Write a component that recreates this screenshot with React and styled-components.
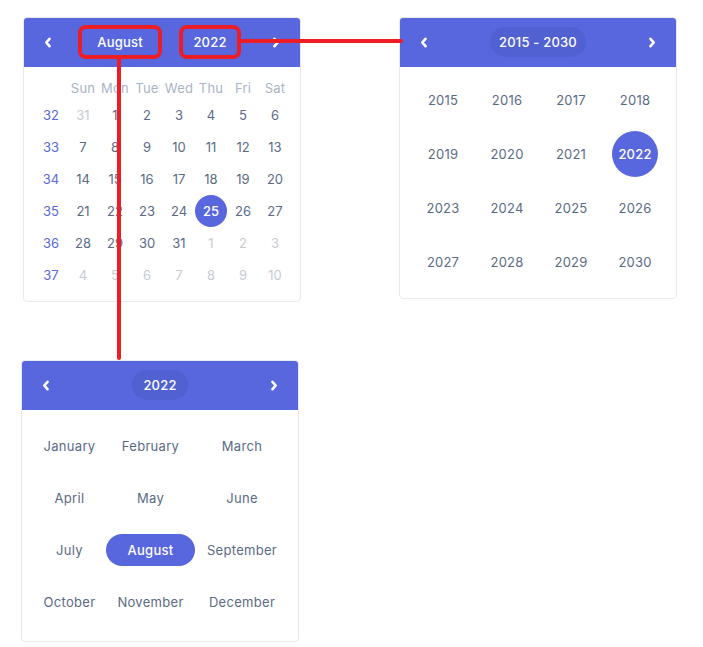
import React from 'react'
import styled, { createGlobalStyle } from 'styled-components'

const GlobalStyle = createGlobalStyle`
  html, body {
    margin: 0;
    padding: 0;
    background: #ffffff;
  }
  body {
    font-family: Inter, "Open Sans", "Noto Sans", sans-serif;
    -webkit-font-smoothing: antialiased;
  }
`

const brand = '#5867dd'
const annot = '#ee1c25'

const Page = styled.div`
  position: relative;
  display: grid;
  grid-template-columns: 378px 278px;
  align-items: start;
  align-content: start;
  row-gap: 58px;
  padding: 17px 0 0 21px;
  width: 703px;
  height: 647px;
  box-sizing: border-box;
`

const Card = styled.div`
  width: ${({ $width }) => $width || 278}px;
  margin-left: ${({ $shift }) => $shift || 0}px;
  border: 1px solid #e8eaed;
  border-radius: 4px;
  background: #fff;
  box-sizing: border-box;
  overflow: hidden;
`

const Header = styled.div`
  display: grid;
  grid-template-columns: 50px 1fr 50px;
  align-items: center;
  height: 50px;
  margin: -1px -1px 0;
  background: ${brand};
  color: #fff;
`

const NavButton = styled.span`
  display: flex;
  justify-content: center;
  align-items: center;
  height: 100%;
`

const TitleGroup = styled.div`
  display: flex;
  justify-content: center;
  align-items: center;
  gap: 17px;
  padding-right: 5px;
`

const TitleButton = styled.span`
  display: flex;
  justify-content: center;
  align-items: center;
  width: ${({ $w }) => $w}px;
  height: 34px;
  box-sizing: border-box;
  border: 4px solid ${annot};
  border-radius: 8px;
  font-size: 13px;
  font-weight: 500;
  letter-spacing: 0.2px;
`

const TitlePill = styled.span`
  justify-self: center;
  display: flex;
  justify-content: center;
  align-items: center;
  width: ${({ $w }) => $w}px;
  height: 30px;
  border-radius: 15px;
  background: #5261d2;
  font-size: 13px;
  font-weight: 500;
  letter-spacing: 0.2px;
`

const DayGrid = styled.div`
  display: grid;
  grid-template-columns: repeat(8, 32px);
  grid-template-rows: 22px repeat(6, 32px);
  padding: 10px 10px 10px 11px;
`

const WeekdayCell = styled.span`
  display: flex;
  justify-content: center;
  align-items: center;
  color: #a9b4c6;
  font-size: 13px;
  letter-spacing: 0.2px;
`

const WeekNum = styled.span`
  display: flex;
  justify-content: center;
  align-items: center;
  color: ${brand};
  font-size: 13px;
`

const Day = styled.span`
  display: flex;
  justify-content: center;
  align-items: center;
  border-radius: 50%;
  font-size: 13px;
  font-weight: ${({ $active }) => ($active ? 500 : 400)};
  color: ${({ $active, $muted }) => ($active ? '#fff' : $muted ? '#c7cbd1' : '#5a6a85')};
  background: ${({ $active }) => ($active ? brand : 'transparent')};
`

const YearGrid = styled.div`
  display: grid;
  grid-template-columns: repeat(4, 64px);
  grid-auto-rows: 54px;
  padding: 6px 11px 9px;
`

const YearCell = styled.span`
  display: flex;
  justify-content: center;
  align-items: center;
  justify-self: center;
  align-self: center;
  width: 46px;
  height: 46px;
  border-radius: 50%;
  font-size: 13px;
  letter-spacing: 0.2px;
  font-weight: ${({ $active }) => ($active ? 500 : 400)};
  color: ${({ $active }) => ($active ? '#fff' : '#5a6a85')};
  background: ${({ $active }) => ($active ? brand : 'transparent')};
`

const MonthGrid = styled.div`
  display: grid;
  grid-template-columns: 73px 89px 94px;
  grid-auto-rows: 52px;
  padding: 10px 11px 13px;
`

const MonthCell = styled.span`
  display: flex;
  justify-content: center;
  align-items: center;
  align-self: center;
  height: 32px;
  border-radius: 16px;
  font-size: 13px;
  letter-spacing: 0.3px;
  font-weight: ${({ $active }) => ($active ? 500 : 400)};
  color: ${({ $active }) => ($active ? '#fff' : '#5a6a85')};
  background: ${({ $active }) => ($active ? brand : 'transparent')};
`

// red annotation connectors drawn over the cards
const HLine = styled.div`
  position: absolute;
  left: 240px;
  top: 39px;
  width: 163px;
  height: 4px;
  background: ${annot};
  border-radius: 2px;
`

const VLine = styled.div`
  position: absolute;
  left: 117px;
  top: 57px;
  width: 4px;
  height: 303px;
  background: ${annot};
  border-radius: 2px;
`

const Chevron = ({ dir }) => (
  <svg width="8" height="11" viewBox="0 0 8 11">
    <polyline
      points={dir === 'left' ? '5.5,1.8 2.3,5.5 5.5,9.2' : '2.5,1.8 5.7,5.5 2.5,9.2'}
      fill="none"
      stroke="#fff"
      strokeWidth="2.6"
      strokeLinecap="round"
      strokeLinejoin="round"
    />
  </svg>
)

const weekdays = ['Sun', 'Mon', 'Tue', 'Wed', 'Thu', 'Fri', 'Sat']

const weeks = [
  { n: 32, days: [[31, true], 1, 2, 3, 4, 5, 6] },
  { n: 33, days: [7, 8, 9, 10, 11, 12, 13] },
  { n: 34, days: [14, 15, 16, 17, 18, 19, 20] },
  { n: 35, days: [21, 22, 23, 24, 25, 26, 27] },
  { n: 36, days: [28, 29, 30, 31, [1, true], [2, true], [3, true]] },
  { n: 37, days: [[4, true], [5, true], [6, true], [7, true], [8, true], [9, true], [10, true]] }
]

const years = []
for (let y = 2015; y <= 2030; y++) years.push(y)

const months = [
  'January', 'February', 'March',
  'April', 'May', 'June',
  'July', 'August', 'September',
  'October', 'November', 'December'
]

const DayPicker = () => (
  <Card $shift={2} $width={278}>
    <Header>
      <NavButton><Chevron dir="left" /></NavButton>
      <TitleGroup>
        <TitleButton $w={84}>August</TitleButton>
        <TitleButton $w={62}>2022</TitleButton>
      </TitleGroup>
      <NavButton><Chevron dir="right" /></NavButton>
    </Header>
    <DayGrid>
      <WeekdayCell />
      {weekdays.map(d => <WeekdayCell key={d}>{d}</WeekdayCell>)}
      {weeks.map(w => (
        <React.Fragment key={w.n}>
          <WeekNum>{w.n}</WeekNum>
          {w.days.map((d, i) => {
            const muted = Array.isArray(d)
            const value = muted ? d[0] : d
            return (
              <Day key={i} $muted={muted} $active={!muted && value === 25}>
                {value}
              </Day>
            )
          })}
        </React.Fragment>
      ))}
    </DayGrid>
  </Card>
)

const YearPicker = () => (
  <Card>
    <Header>
      <NavButton><Chevron dir="left" /></NavButton>
      <TitlePill $w={96}>2015 - 2030</TitlePill>
      <NavButton><Chevron dir="right" /></NavButton>
    </Header>
    <YearGrid>
      {years.map(y => <YearCell key={y} $active={y === 2022}>{y}</YearCell>)}
    </YearGrid>
  </Card>
)

const MonthPicker = () => (
  <Card>
    <Header>
      <NavButton><Chevron dir="left" /></NavButton>
      <TitlePill $w={56}>2022</TitlePill>
      <NavButton><Chevron dir="right" /></NavButton>
    </Header>
    <MonthGrid>
      {months.map(m => <MonthCell key={m} $active={m === 'August'}>{m}</MonthCell>)}
    </MonthGrid>
  </Card>
)

export default function App () {
  return (
    <>
      <GlobalStyle />
      <Page>
        <DayPicker />
        <YearPicker />
        <MonthPicker />
        <HLine />
        <VLine />
      </Page>
    </>
  )
}
